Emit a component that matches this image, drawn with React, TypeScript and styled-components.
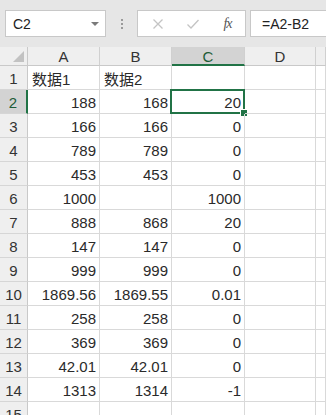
import React from "react";
import styled, { createGlobalStyle, css } from "styled-components";

const Global = createGlobalStyle`
  html, body { margin: 0; padding: 0; background: #ffffff; }
  body { font-family: "Liberation Sans", "Noto Sans CJK SC", sans-serif; overflow: hidden; }
`;

const Page = styled.div`
  width: 326px;
  height: 415px;
  overflow: hidden;
  display: flex;
  flex-direction: column;
`;

const Toolbar = styled.div`
  height: 47px;
  flex: none;
  background: #e6e6e6;
  display: flex;
  align-items: flex-start;
  padding: 10px 0 0 5px;
  box-sizing: border-box;
`;

const NameBox = styled.div`
  width: 101px;
  height: 27px;
  box-sizing: border-box;
  background: #fff;
  border: 1px solid #c8c8c8;
  display: flex;
  align-items: center;
  justify-content: space-between;
  padding: 0 6px 0 7px;
  font-size: 14px;
  color: #222;
`;

const Caret = styled.span`
  width: 0;
  height: 0;
  border-left: 4px solid transparent;
  border-right: 4px solid transparent;
  border-top: 4px solid #7a7a7a;
`;

const Dots = styled.div`
  width: 31px;
  height: 27px;
  display: flex;
  flex-direction: column;
  align-items: center;
  justify-content: center;
  gap: 2px;
  span { width: 2px; height: 2px; background: #9a9a9a; }
`;

const FxTools = styled.div`
  width: 109px;
  height: 27px;
  box-sizing: border-box;
  background: #fff;
  border: 1px solid #c8c8c8;
  display: grid;
  grid-template-columns: 1fr 1fr 1fr;
  align-items: center;
  justify-items: center;
  padding: 0 0 0 2px;
`;

const Fx = styled.span`
  font-family: "Liberation Serif", serif;
  font-style: italic;
  font-size: 14px;
  color: #555;
  letter-spacing: -1px;
`;

const FormulaInput = styled.div`
  margin-left: 4px;
  flex: 1;
  height: 27px;
  box-sizing: border-box;
  background: #fff;
  border: 1px solid #c8c8c8;
  border-right: none;
  display: flex;
  align-items: center;
  padding-left: 11px;
  font-size: 14px;
  color: #222;
`;

const Grid = styled.div`
  display: grid;
  grid-template-columns: 28px 72px 72px 73px 71px 10px;
  grid-auto-rows: 24px;
  grid-template-rows: 19px;
  font-size: 15px;
  color: #2a2a2a;
`;

const Corner = styled.div`
  background: #efefef;
  border-right: 1px solid #c9c9c9;
  border-bottom: 1px solid #c9c9c9;
  position: relative;
  &::after {
    content: "";
    position: absolute;
    right: 3px;
    bottom: 3px;
    width: 0;
    height: 0;
    border-left: 11px solid transparent;
    border-bottom: 11px solid #c2c2c2;
  }
`;

const ColHead = styled.div<{ $sel?: boolean }>`
  background: ${(p) => (p.$sel ? "#d3d3d3" : "#efefef")};
  border-right: 1px solid #d0d0d0;
  border-bottom: ${(p) => (p.$sel ? "2px solid #217346" : "1px solid #c9c9c9")};
  display: flex;
  align-items: center;
  justify-content: center;
  color: ${(p) => (p.$sel ? "#1e5c38" : "#333")};
  font-size: 15px;
  padding-top: 1px;
`;

const RowHead = styled.div<{ $sel?: boolean }>`
  background: ${(p) => (p.$sel ? "#d3d3d3" : "#efefef")};
  border-bottom: 1px solid #d6d6d6;
  border-right: ${(p) => (p.$sel ? "2px solid #217346" : "1px solid #c9c9c9")};
  display: flex;
  align-items: center;
  justify-content: center;
  color: ${(p) => (p.$sel ? "#1e5c38" : "#333")};
  font-size: 15px;
  padding-top: 2px;
`;

const Cell = styled.div<{ $text?: boolean; $sel?: boolean }>`
  border-right: 1px solid #d9d9d9;
  border-bottom: 1px solid #d9d9d9;
  display: flex;
  align-items: center;
  justify-content: ${(p) => (p.$text ? "flex-start" : "flex-end")};
  padding: 2px 3px 0 4px;
  white-space: nowrap;
  overflow: hidden;
  position: relative;
  ${(p) =>
    p.$sel &&
    css`
      overflow: visible;
      &::before {
        content: "";
        position: absolute;
        left: -2px;
        top: -1px;
        right: -1px;
        bottom: -1px;
        border: 2px solid #217346;
        pointer-events: none;
      }
      &::after {
        content: "";
        position: absolute;
        right: -4px;
        bottom: -4px;
        width: 6px;
        height: 6px;
        background: #217346;
        border: 1px solid #fff;
      }
    `}
`;

type Row = [string, string, string];
const rows: Row[] = [
  ["数据1", "数据2", ""],
  ["188", "168", "20"],
  ["166", "166", "0"],
  ["789", "789", "0"],
  ["453", "453", "0"],
  ["1000", "", "1000"],
  ["888", "868", "20"],
  ["147", "147", "0"],
  ["999", "999", "0"],
  ["1869.56", "1869.55", "0.01"],
  ["258", "258", "0"],
  ["369", "369", "0"],
  ["42.01", "42.01", "0"],
  ["1313", "1314", "-1"],
  ["", "", ""],
];

export default function App() {
  return (
    <Page>
      <Global />
      <Toolbar>
        <NameBox>
          <span>C2</span>
          <Caret />
        </NameBox>
        <Dots>
          <span />
          <span />
          <span />
        </Dots>
        <FxTools>
          <svg width="12" height="12" viewBox="0 0 12 12">
            <path d="M1.5 1.5 L10.5 10.5 M10.5 1.5 L1.5 10.5" stroke="#c4c4c4" strokeWidth="1.3" fill="none" />
          </svg>
          <svg width="14" height="12" viewBox="0 0 14 12">
            <path d="M1.5 6.5 L5 10 L12.5 2" stroke="#c4c4c4" strokeWidth="1.3" fill="none" />
          </svg>
          <Fx>fx</Fx>
        </FxTools>
        <FormulaInput>=A2-B2</FormulaInput>
      </Toolbar>
      <Grid>
        <Corner />
        <ColHead>A</ColHead>
        <ColHead>B</ColHead>
        <ColHead $sel>C</ColHead>
        <ColHead>D</ColHead>
        <ColHead />
        {rows.map((r, i) => (
          <React.Fragment key={i}>
            <RowHead $sel={i === 1}>{i + 1}</RowHead>
            <Cell $text={i === 0}>{r[0]}</Cell>
            <Cell $text={i === 0}>{r[1]}</Cell>
            <Cell $sel={i === 1}>{r[2]}</Cell>
            <Cell />
            <Cell />
          </React.Fragment>
        ))}
      </Grid>
    </Page>
  );
}
